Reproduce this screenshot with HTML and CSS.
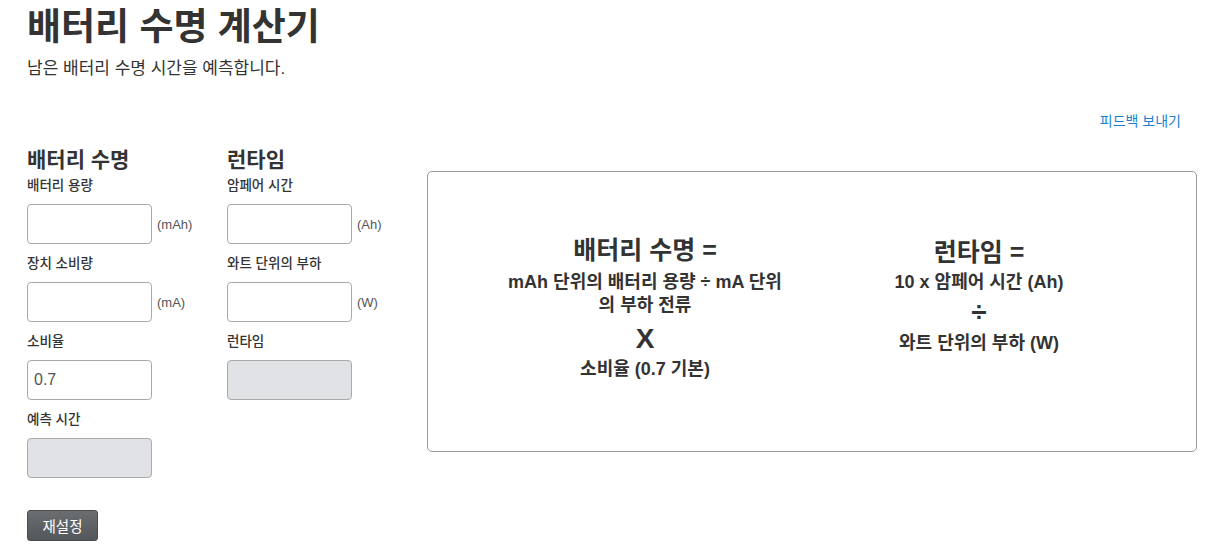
FILE: index.html
```html
<!DOCTYPE html>
<html lang="ko">
<head>
<meta charset="utf-8">
<link rel="stylesheet" href="styles.css">
</head>
<body>
<div class="page">
  <header class="head">
    <h1 class="title">배터리 수명 계산기</h1>
    <p class="subtitle">남은 배터리 수명 시간을 예측합니다.</p>
  </header>
  <div class="feedback-row"><a class="feedback" href="#">피드백 보내기</a></div>
  <div class="main">
    <div class="form">
      <div class="col">
        <h2 class="sec">배터리 수명</h2>
        <div class="field">
          <label class="lbl">배터리 용량</label>
          <div class="inrow"><input class="inp" type="text"><span class="unit">(mAh)</span></div>
        </div>
        <div class="field">
          <label class="lbl">장치 소비량</label>
          <div class="inrow"><input class="inp" type="text"><span class="unit">(mA)</span></div>
        </div>
        <div class="field">
          <label class="lbl">소비율</label>
          <div class="inrow"><input class="inp" type="text" value="0.7"></div>
        </div>
        <div class="field">
          <label class="lbl">예측 시간</label>
          <div class="inrow"><input class="inp ro" type="text" readonly></div>
        </div>
        <button class="btn" type="button">재설정</button>
      </div>
      <div class="col">
        <h2 class="sec">런타임</h2>
        <div class="field">
          <label class="lbl">암페어 시간</label>
          <div class="inrow"><input class="inp" type="text"><span class="unit">(Ah)</span></div>
        </div>
        <div class="field">
          <label class="lbl">와트 단위의 부하</label>
          <div class="inrow"><input class="inp" type="text"><span class="unit">(W)</span></div>
        </div>
        <div class="field">
          <label class="lbl">런타임</label>
          <div class="inrow"><input class="inp ro" type="text" readonly></div>
        </div>
      </div>
    </div>
    <div class="box">
      <div class="formula">
        <div class="f-title">배터리 수명 =</div>
        <div class="f-line f-wrap">mAh 단위의 배터리 용량 ÷ mA 단위의 부하 전류</div>
        <div class="f-op">X</div>
        <div class="f-line f-last">소비율 (0.7 기본)</div>
      </div>
      <div class="formula">
        <div class="f-title f-title-r">런타임 =</div>
        <div class="f-line">10 x 암페어 시간 (Ah)</div>
        <div class="f-div">÷</div>
        <div class="f-line f-last-r">와트 단위의 부하 (W)</div>
      </div>
    </div>
  </div>
</div>
</body>
</html>
```
FILE: styles.css
```css
* { box-sizing: border-box; }
html, body { margin: 0; padding: 0; background: #fff; }
body {
  font-family: "Liberation Sans", "Noto Sans CJK KR", Arial, sans-serif;
  color: #333;
  font-size: 14px;
}
.page { padding: 0 32px 0 27px; }
.head { padding-top: 6px; }
.title {
  margin: 0;
  font-size: 37px;
  line-height: 44px;
  font-weight: 700;
  color: #333;
}
.subtitle {
  margin: 8px 0 0;
  font-size: 17px;
  line-height: 22px;
  color: #333;
}
.feedback-row {
  display: flex;
  justify-content: flex-end;
  margin-top: 33px;
  padding-right: 15px;
}
.feedback {
  font-size: 14px;
  line-height: 16px;
  color: #1a7fd1;
  text-decoration: none;
}
.main {
  display: flex;
  align-items: flex-start;
  margin-top: 18px;
}
.form { display: flex; width: 400px; flex: none; }
.col { width: 200px; display: flex; flex-direction: column; align-items: flex-start; }
.sec {
  margin: 0 0 4px;
  font-size: 21px;
  line-height: 26px;
  font-weight: 700;
  color: #333;
}
.field { display: flex; flex-direction: column; margin-bottom: 11px; }
.lbl {
  font-size: 13.5px;
  line-height: 18px;
  font-weight: 500;
  color: #333;
  margin-bottom: 9px;
}
.inrow { display: flex; align-items: center; }
.inp {
  width: 125px;
  height: 40px;
  border: 1px solid #aaa;
  border-radius: 4px;
  padding: 0 6px;
  font-family: "Liberation Sans", Arial, sans-serif;
  font-size: 16px;
  color: #555;
  background: #fff;
  margin: 0;
}
.inp.ro { background: #e0e2e6; }
.unit {
  margin-left: 5px;
  font-size: 13px;
  color: #555;
}
.btn {
  margin-top: 21px;
  width: 71px;
  height: 31px;
  border: 1px solid #4a4c4e;
  border-radius: 3px;
  background: linear-gradient(#6b6e71, #54575a);
  color: #fff;
  font-family: "Liberation Sans", "Noto Sans CJK KR", sans-serif;
  font-size: 14.5px;
  padding: 0;
}
.box {
  margin-top: 24px;
  width: 770px;
  height: 281px;
  border: 1px solid #999;
  border-radius: 5px;
  display: flex;
  padding: 63px 50px 0;
}
.formula {
  width: 334px;
  display: flex;
  flex-direction: column;
  align-items: center;
  text-align: center;
  font-weight: 700;
  color: #333;
}
.f-title { font-size: 25px; line-height: 30px; margin-bottom: 6px; }
.f-title-r { margin-top: 2px; margin-bottom: 4px; }
.f-line { font-size: 18px; line-height: 23px; }
.f-wrap { width: 282px; word-break: break-all; }
.f-op { font-size: 28px; line-height: 34px; margin-top: 5px; }
.f-last { margin-top: 2px; }
.f-div { font-size: 28px; line-height: 30px; margin-top: 3px; }
.f-last-r { margin-top: 5px; }
```
